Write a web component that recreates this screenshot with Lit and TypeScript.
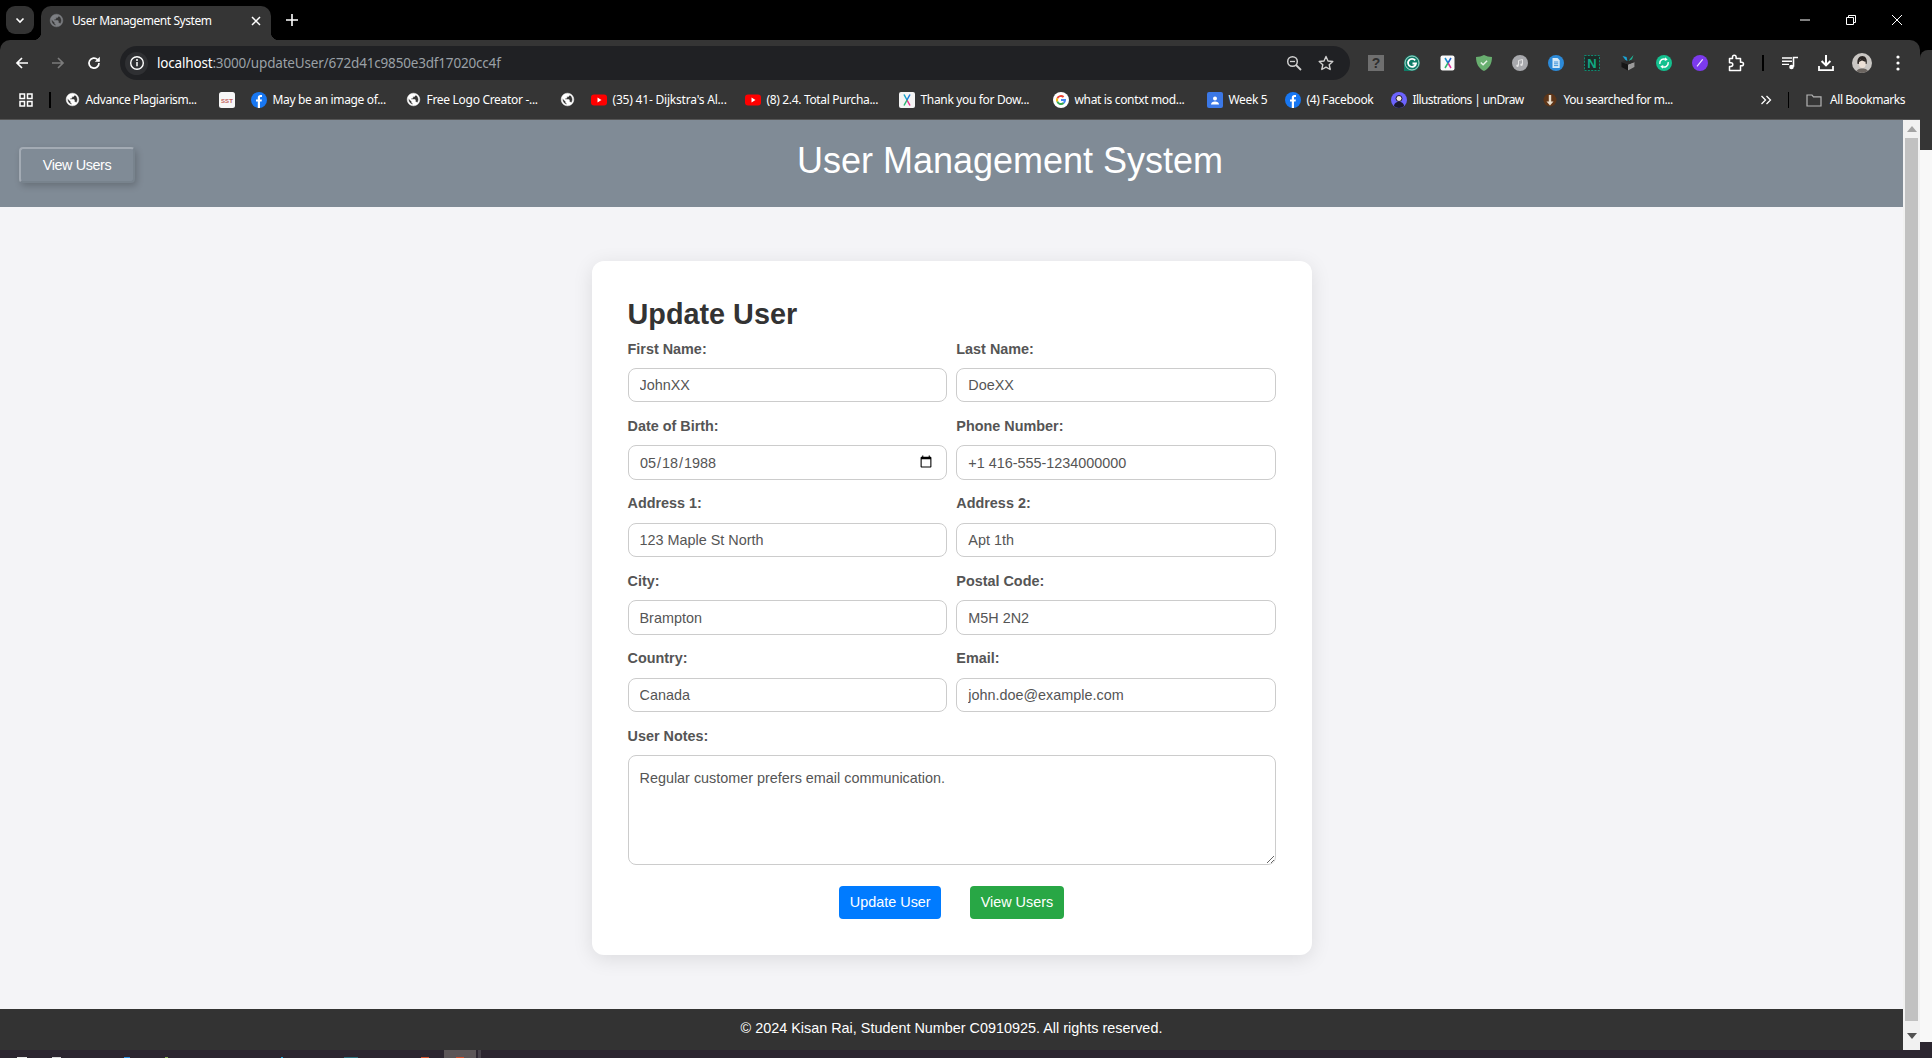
import { LitElement, html, css } from "lit";
import { customElement } from "lit/decorators.js";

const globePath = "M12 2C6.48 2 2 6.48 2 12s4.48 10 10 10 10-4.48 10-10S17.52 2 12 2zm-1 17.93c-3.95-.49-7-3.85-7-7.93 0-.62.08-1.21.21-1.79L9 15v1c0 1.1.9 2 2 2v1.93zm6.9-2.54c-.26-.81-1-1.39-1.9-1.39h-1v-3c0-.55-.45-1-1-1H8v-2h2c.55 0 1-.45 1-1V7h2c1.1 0 2-.9 2-2v-.41c2.93 1.19 5 4.06 5 7.41 0 2.08-.8 3.97-2.1 5.39z";

const globe = (c = "#fff") => html`<svg viewBox="0 0 24 24" class="i15"><circle cx="12" cy="12" r="10" fill="#353535"/><path d=${globePath} fill=${c} stroke=${c} stroke-width=".9"/></svg>`;
const fb = html`<svg viewBox="0 0 16 16" class="i16"><circle cx="8" cy="8" r="8" fill="#1877f2"/><path d="M11 5.100H9.900c-.7 0-.9.4-.9.9v1.400h1.900l-.3 2H9V16H6.800v-6.600H5v-2h1.800V5.700C6.800 3.800 7.900 3 9.500 3c.7 0 1.200.05 1.500.1z" fill="#fff"/></svg>`;
const yt = html`<svg viewBox="0 0 16 16" class="i16"><rect y="2.500" width="16" height="11" rx="3" fill="#f00"/><path d="M6.500 5.500v5L10.500 8z" fill="#fff"/></svg>`;
const xlogo = html`<svg viewBox="0 0 16 16" class="i16"><rect width="16" height="16" rx="2" fill="#f4f4f4"/><path d="M5 2.500l3 5.500" stroke="#15a5c9" stroke-width="1.500" fill="none"/><path d="M11 2.500L8 8" stroke="#1c7bd6" stroke-width="1.500" fill="none"/><path d="M8 8l3 5.500" stroke="#ea2d8e" stroke-width="1.500" fill="none"/><path d="M8 8l-3 5.500" stroke="#2cb673" stroke-width="1.500" fill="none"/></svg>`;
const sst = html`<svg viewBox="0 0 16 16" class="i16"><rect width="16" height="16" rx="2.500" fill="#f7f7f7"/><text x="8" y="10.500" text-anchor="middle" font-size="6" font-weight="700" font-family="Liberation Sans" fill="#c2605a" letter-spacing=".1">SST</text></svg>`;
const goog = html`<svg viewBox="0 0 16 16" class="i16"><circle cx="8" cy="8" r="8" fill="#fff"/><path d="M4.300 6.500A3.900 3.900 0 0 1 10.600 5.100" stroke="#ea4335" stroke-width="2" fill="none"/><path d="M4.300 9.500a3.900 3.900 0 0 1 0-3" stroke="#fbbc05" stroke-width="2" fill="none"/><path d="M4.300 9.500A3.900 3.900 0 0 0 10.600 11" stroke="#34a853" stroke-width="2" fill="none"/><path d="M8 8h4c0 1.300-.5 2.300-1.400 3" stroke="#4285f4" stroke-width="2" fill="none"/></svg>`;
const week = html`<svg viewBox="0 0 16 16" class="i16"><rect width="16" height="16" rx="2" fill="#3b78e7"/><circle cx="8" cy="6.500" r="2" fill="#fff"/><path d="M4 12.500c0-2 1.800-3 4-3s4 1 4 3z" fill="#fff"/></svg>`;
const undraw = html`<svg viewBox="0 0 16 16" class="i16"><circle cx="8" cy="8" r="8" fill="#6c63ff"/><circle cx="8" cy="6.500" r="3" fill="#f3e6dc" stroke="#1c1a2e" stroke-width="1"/><path d="M2.800 14c.6-3 2.800-4.300 5.200-4.300S12.600 11 13.200 14A8 8 0 0 1 2.800 14z" fill="#1c1a2e"/></svg>`;
const acorn = html`<svg viewBox="0 0 16 16" class="i16"><circle cx="8" cy="8" r="6.500" fill="#5d3518"/><path d="M6.800 3h2.400v6.500h2.300L8 13.500 4.500 9.500h2.300z" fill="#e9ddcc"/></svg>`;

const ico = {
  q: html`<svg viewBox="0 0 16 16" class="i16"><rect width="16" height="16" fill="#6f6f6f"/><text x="8" y="13" text-anchor="middle" font-size="14" font-weight="700" font-family="Liberation Sans" fill="#2e2e2e">?</text></svg>`,
  gram: html`<svg viewBox="0 0 16 16" class="i16"><path d="M8 0a8 8 0 0 1 0 16H0V8a8 8 0 0 1 8-8z" fill="#0f7c68"/><circle cx="8" cy="8" r="7" fill="#0f7c68" stroke="#d8efe9" stroke-width=".8"/><path d="M11.200 5.400A4 4 0 1 0 12 8.500H8.500" stroke="#fff" stroke-width="1.800" fill="none"/></svg>`,
  x: html`<svg viewBox="0 0 16 16" class="i16"><rect x=".5" y=".5" width="14" height="15" rx="2" fill="#fafafa"/><path d="M5 3l3 5" stroke="#1a8fd0" stroke-width="1.500" fill="none"/><path d="M11 3L8 8" stroke="#1e62c9" stroke-width="1.500" fill="none"/><path d="M8 8l3 5" stroke="#e32c9b" stroke-width="1.500" fill="none"/><path d="M8 8l-3 5" stroke="#32b56f" stroke-width="1.500" fill="none"/></svg>`,
  shield: html`<svg viewBox="0 0 16 16" class="i16"><path d="M8 0c2.500 1.300 5 1.800 8 2 0 6.500-2.500 11.300-8 14C2.500 13.300 0 8.500 0 2c3-.2 5.500-.7 8-2z" fill="#68ae6f"/><path d="M4.800 7.500l2.300 2.300 4-4" stroke="#e6f3e7" stroke-width="1.500" fill="none"/></svg>`,
  music: html`<svg viewBox="0 0 16 16" class="i16"><circle cx="8" cy="8" r="8" fill="#a8a9ad"/><path d="M6.500 10.500v-5l4-1v5" stroke="#e4e4e4" stroke-width="1" fill="none"/><circle cx="5.500" cy="10.700" r="1.200" fill="#e4e4e4"/><circle cx="9.500" cy="9.800" r="1.200" fill="#e4e4e4"/></svg>`,
  doc: html`<svg viewBox="0 0 16 16" class="i16"><circle cx="8" cy="8" r="8" fill="#2c8ad8"/><path d="M4.500 3h5l2.200 2.200V13h-7.200z" fill="#d5e8f7"/><path d="M6 7h4.200M6 8.800h4.200M6 10.600h4.200" stroke="#2c8ad8" stroke-width=".9"/></svg>`,
  n: html`<svg viewBox="0 0 16 16" class="i16"><rect x=".5" y=".5" width="15" height="15" fill="#1e2b28" stroke="#0f8a70" stroke-dasharray="2 1.300"/><text x="8" y="13" text-anchor="middle" font-size="13" font-weight="700" font-family="Liberation Sans" fill="#10a883">N</text></svg>`,
  box: html`<svg viewBox="0 0 16 16" class="i16"><path d="M1.500 7L8 9.500 14.500 7v5L8 15.500 1.500 12z" fill="#151515"/><path d="M8 9.500v6L14.500 12V7z" fill="#9a9a9a"/><path d="M1.500 7L8 4.500 14.500 7 8 9.500z" fill="#2b2b2b"/><path d="M2.500 1L5.500 5 7.500 6 6.500 2z" fill="#1aa6d9"/><path d="M13.500 0L10 4 8.500 6 12 4.200z" fill="#1fb89a"/></svg>`,
  sync: html`<svg viewBox="0 0 16 16" class="i16"><circle cx="8" cy="8" r="8" fill="#14c08f"/><path d="M3.800 8.800A4.300 4.300 0 0 1 10 4.400" stroke="#fff" stroke-width="1.500" fill="none"/><path d="M9.200 2.300l2.500 2.500-3 1.300z" fill="#fff"/><path d="M12.200 7.200A4.300 4.300 0 0 1 6 11.600" stroke="#fff" stroke-width="1.500" fill="none"/><path d="M6.800 13.700l-2.500-2.500 3-1.300z" fill="#fff"/></svg>`,
  pen: html`<svg viewBox="0 0 16 16" class="i16"><circle cx="8" cy="8" r="8" fill="#7c3aed"/><path d="M5 11.300L10.700 4.300" stroke="#f2e9ff" stroke-width="1.200" fill="none"/></svg>`,
  puzzle: html`<svg viewBox="0 0 18 18" class="i18"><path d="M2.500 4.500h3V3a1.800 1.800 0 0 1 3.600 0v1.500h4.400v3.700h1.200a1.800 1.800 0 0 1 0 3.600h-1.200v4.700h-11v-4h1.400a1.900 1.900 0 0 0 0-3.800H2.500z" fill="none" stroke="#fff" stroke-width="1.500" stroke-linejoin="round"/></svg>`,
  queue: html`<svg viewBox="0 0 18 18" class="i18"><path d="M1 4h10M1 7.200h10M1 10.400h7" stroke="#fff" stroke-width="1.400" fill="none"/><path d="M12.500 12.800V3.500H17" stroke="#fff" stroke-width="1.600" fill="none"/><circle cx="10.500" cy="13" r="2.300" fill="#fff"/></svg>`,
  dl: html`<svg viewBox="0 0 18 18" class="i18"><path d="M9 1v10M4.600 7L9 11.400 13.400 7" stroke="#fff" stroke-width="2" fill="none"/><path d="M2 12v4.200h14V12" stroke="#fff" stroke-width="1.800" fill="none"/></svg>`,
  avatar: html`<svg viewBox="0 0 20 20" class="i20"><defs><clipPath id="av"><circle cx="10" cy="10" r="10"/></clipPath></defs><g clip-path="url(#av)"><rect width="20" height="20" fill="#c9c6c3"/><path d="M5.500 11c-.8-5 1.500-8 4.800-8s5.200 3 4.300 8z" fill="#2a2523"/><ellipse cx="10.300" cy="10.500" rx="3.400" ry="4.500" fill="#ece0d6"/><path d="M6.800 9c.3-2 1.800-3.300 3.600-3.300S13.500 7 13.800 9L10 7.500z" fill="#2a2523"/><path d="M4 20c.5-3.500 2.800-4.500 6.300-4.500S16 16.500 16.500 20z" fill="#6b6560"/></g></svg>`,
  dots: html`<svg viewBox="0 0 18 18" class="i18"><circle cx="9" cy="3" r="1.600" fill="#fff"/><circle cx="9" cy="9" r="1.600" fill="#fff"/><circle cx="9" cy="15" r="1.600" fill="#fff"/></svg>`,
};

const marks = [
  { w: 154, i: globe(), t: "Advance Plagiarism...", ls: -0.42 },
  { w: 32, i: sst, t: "", ls: 0 },
  { w: 155, i: fb, t: "May be an image of...", ls: -0.34 },
  { w: 154, i: globe(), t: "Free Logo Creator -...", ls: -0.3 },
  { w: 31, i: globe(), t: "", ls: 0 },
  { w: 154, i: yt, t: "(35) 41- Dijkstra's Al...", ls: -0.2 },
  { w: 154, i: yt, t: "(8) 2.4. Total Purcha...", ls: -0.34 },
  { w: 154, i: xlogo, t: "Thank you for Dow...", ls: -0.34 },
  { w: 154, i: goog, t: "what is contxt mod...", ls: -0.34 },
  { w: 78, i: week, t: "Week 5", ls: -0.34 },
  { w: 106, i: fb, t: "(4) Facebook", ls: -0.34 },
  { w: 151, i: undraw, t: "Illustrations | unDraw", ls: -0.6 },
  { w: 140, i: acorn, t: "You searched for m...", ls: -0.45 },
];

const fields = [
  ["First Name:", "JohnXX", "text"],
  ["Last Name:", "DoeXX", "text"],
  ["Date of Birth:", "1988-05-18", "date"],
  ["Phone Number:", "+1 416-555-1234000000", "text"],
  ["Address 1:", "123 Maple St North", "text"],
  ["Address 2:", "Apt 1th", "text"],
  ["City:", "Brampton", "text"],
  ["Postal Code:", "M5H 2N2", "text"],
  ["Country:", "Canada", "text"],
  ["Email:", "john.doe@example.com", "email"],
];

const tray = [
  { l: 17, w: 10, c: "#e8e8e8" },
  { l: 25, w: 9, c: "#d8d8d8" },
  { l: 63, w: 6, c: "#2b8fe0" },
  { l: 35, w: 3, c: "#8db05a" },
  { l: 113, w: 2, c: "#26a5d8" },
  { l: 61, w: 14, c: "#2c6f7d" },
  { l: 63, w: 8, c: "#d0512e" },
];

@customElement("app-root")
export class AppRoot extends LitElement {
  static styles = css`
    :host { display: block; width: 1932px; height: 1058px; overflow: hidden; background: #000; font-family: "Liberation Sans", Arial, sans-serif; }
    svg { display: block; flex: none; }
    .i15 { width: 15px; height: 15px; }
    .i16 { width: 16px; height: 16px; }
    .i18 { width: 18px; height: 18px; }
    .i20 { width: 20px; height: 20px; }
    .desk { display: flex; height: 1050px; }
    .win { width: 1920px; flex: none; display: flex; flex-direction: column; }
    .side { flex: 1; display: flex; flex-direction: column; }
    .side .blk { height: 50px; background: #000; }
    .side .pan { height: 100px; background: #353535; border-top-left-radius: 8px; }
    .side .wht { height: 892px; background: #f8f8f8; }
    .side .drk { flex: 1; background: #2c2630; }

    .chrome-ui { font-family: "Noto Sans", "Open Sans", sans-serif; color: #fff; }
    .tabs { height: 40px; background: #000; display: flex; flex: none; }
    .tabsearch { width: 28px; height: 28px; margin: 6px 0 0 6px; background: #333; border-radius: 9px; display: flex; align-items: center; justify-content: center; }
    .tab { width: 230px; height: 34px; margin: 6px 0 0 7px; background: #353535; border-radius: 10px 10px 0 0; display: flex; align-items: center; position: relative; box-sizing: border-box; padding-left: 8px; }
    .tab::before, .tab::after { content: ""; position: absolute; bottom: 0; width: 8px; height: 8px; }
    .tab::before { left: -8px; background: radial-gradient(circle at 0 0, #000 8px, #353535 8.5px); }
    .tab::after { right: -8px; background: radial-gradient(circle at 100% 0, #000 8px, #353535 8.5px); }
    .tab .title { margin-left: 8px; font-size: 12px; letter-spacing: -0.42px; width: 167px; white-space: nowrap; margin-top: -5px; }
    .tab .fav { margin-top: -5px; }
    .tab .close { margin-top: -5px; margin-left: 11px; }
    .newtab { margin: 8px 0 0 9px; width: 24px; height: 24px; display: flex; align-items: center; justify-content: center; }
    .winctl { margin-left: auto; display: flex; }
    .winctl div { width: 46px; height: 40px; display: flex; align-items: center; justify-content: center; }

    .toolbar { height: 40px; background: #353535; border-radius: 10px 10px 0 0; display: flex; align-items: flex-end; padding-left: 4px; flex: none; }
    .slot { width: 36px; height: 34px; display: flex; align-items: center; justify-content: center; flex: none; }
    .omni { width: 1230px; height: 34px; margin: 0 8px; background: #202124; border-radius: 17px; display: flex; align-items: center; box-sizing: border-box; padding: 0 8px 0 5px; flex: none; }
    .info { width: 23px; height: 23px; border-radius: 50%; background: #2f3033; display: flex; align-items: center; justify-content: center; flex: none; }
    .url { margin-left: 9px; font-size: 13.5px; letter-spacing: -0.18px; color: #9aa0a6; white-space: nowrap; }
    .url b { font-weight: 400; color: #fff; }
    .omni .end { margin-left: auto; display: flex; }
    .omni .end div { width: 32px; display: flex; justify-content: center; }
    .tsep { width: 2px; height: 16px; background: #000; margin: 0 8px 9px; flex: none; }

    .marks { height: 40px; background: #353535; border-bottom: 1px solid #555; box-sizing: border-box; display: flex; align-items: center; flex: none; }
    .apps { margin-left: 18px; }
    .bsep { width: 1.5px; height: 16px; background: #000; flex: none; }
    .marks > .bsep:nth-child(2) { margin: 0 14px 0 15px; }
    .bm { display: flex; align-items: center; gap: 6px; flex: none; font-size: 12px; white-space: nowrap; }
    .right { margin-left: auto; display: flex; align-items: center; font-size: 12px; letter-spacing: -0.45px; padding-right: 15px; }
    .right svg:first-child { margin-right: -1px; }
    .right .sep2 { margin: 0 17px 0 17px; }
    .right .lbl { margin-left: 8px; }

    .view { flex: 1; display: flex; min-height: 0; }
    .page { flex: 1; display: flex; flex-direction: column; background: #f4f4f7; min-width: 0; }
    .hdr { height: 87px; flex: none; background: #808b96; display: flex; align-items: center; padding: 0 20px 0 19px; box-sizing: border-box; }
    .navbtn { width: 116px; height: 36px; margin-top: 2px; box-sizing: border-box; background: #808b96; color: #fff; font: 14.4px "Liberation Sans", Arial, sans-serif; letter-spacing: -0.4px; border-style: solid; border-width: 2px; border-color: #a3abb4 #78838d #78838d #a3abb4; border-radius: 4px; box-shadow: 2px 3px 7px rgba(0, 0, 0, 0.2); padding: 0; }
    h1 { flex: 1; margin: -6px 0 0; padding-left: 2px; text-align: center; font-weight: 400; font-size: 36px; color: #fff; }
    main { flex: 1; display: flex; justify-content: center; padding-top: 54px; box-sizing: border-box; min-height: 0; }
    .card { width: 720px; height: 694px; box-sizing: border-box; padding: 36px; background: #fff; border-radius: 12px; box-shadow: 0 4px 20px rgba(0, 0, 0, 0.1); }
    h2 { margin: 1px 0 9.5px; font-size: 28.8px; line-height: 33px; font-weight: 700; color: #333; }
    form { display: grid; grid-template-columns: 1fr 1fr; column-gap: 9.6px; row-gap: 15.6px; }
    label { display: block; font-size: 14.4px; line-height: 17px; font-weight: 700; color: #555; margin-bottom: 10.5px; }
    input, textarea { display: block; width: 100%; box-sizing: border-box; height: 34.4px; padding: 0 11px; border: 1px solid #ccc; border-radius: 8px; font: 14.4px "Liberation Sans", Arial, sans-serif; color: #555; background: #fff; outline: none; margin: 0; }
    input[type="date"] { padding: 0 10.5px; }
    textarea { height: 109.4px; padding: 13.5px 11px 0; }
    .wide { grid-column: 1 / -1; }
    .acts { grid-column: 1 / -1; display: flex; justify-content: center; gap: 29px; margin-top: 5.5px; }
    .acts button { height: 33px; border: 0; border-radius: 4px; color: #fff; padding: 0 10.5px; font: 14.4px "Liberation Sans", Arial, sans-serif; }
    .blue { background: #007bff; }
    .green { background: #28a745; }
    footer { height: 41px; flex: none; background: #333; color: #fff; display: flex; align-items: center; justify-content: center; font-size: 14.4px; padding-bottom: 3px; box-sizing: border-box; }
    .sb { width: 17px; flex: none; background: #f1f1f1; display: flex; flex-direction: column; align-items: center; }
    .sb .up { height: 18px; flex: none; display: flex; align-items: center; justify-content: center; }
    .sb .thumb { width: 13px; height: 883px; background: #c1c1c1; flex: none; }
    .sb .down { flex: 1; display: flex; align-items: center; justify-content: center; }

    .taskbar { height: 8px; background: #2c2630; display: flex; }
    .tile { width: 32px; height: 8px; margin-left: 444px; flex: none; background: #5c5658; display: flex; align-items: flex-end; justify-content: center; }
    .tile span { width: 8px; height: 1.5px; background: #d0512e; }
    .tile2 { width: 3px; height: 8px; background: #47424a; margin-left: 2px; flex: none; }
    .taskbits { display: flex; align-items: flex-end; width: 0; flex: none; }
    .taskbits span { height: 1.5px; flex: none; }
  `;

  render() {
    return html`
      <div class="desk">
        <div class="win">
          <div class="chrome-ui">
            <div class="tabs">
              <div class="tabsearch"><svg viewBox="0 0 12 12" width="12" height="12"><path d="M2.5 4.500L6 8l3.500-3.500" stroke="#fff" stroke-width="1.600" fill="none"/></svg></div>
              <div class="tab">
                <span class="fav">${globe("#7d7f83")}</span>
                <span class="title">User Management System</span>
                <svg class="close" viewBox="0 0 12 12" width="12" height="12"><path d="M2 2l8 8M10 2l-8 8" stroke="#fff" stroke-width="1.500"/></svg>
              </div>
              <div class="newtab"><svg viewBox="0 0 14 14" width="14" height="14"><path d="M7 1v12M1 7h12" stroke="#fff" stroke-width="1.600"/></svg></div>
              <div class="winctl">
                <div><svg viewBox="0 0 12 12" width="12" height="12"><path d="M1 6h10" stroke="#fff"/></svg></div>
                <div><svg viewBox="0 0 12 12" width="12" height="12"><path d="M1.500 3.500h7v7h-7zM3.500 3.500v-2h7v7h-2" stroke="#fff" fill="none"/></svg></div>
                <div><svg viewBox="0 0 12 12" width="12" height="12"><path d="M1 1l10 10M11 1L1 11" stroke="#fff"/></svg></div>
              </div>
            </div>
            <div class="toolbar">
              <div class="slot"><svg viewBox="0 0 16 16" class="i16"><path d="M14 8H3M8 3L3 8l5 5" stroke="#fff" stroke-width="1.700" fill="none"/></svg></div>
              <div class="slot"><svg viewBox="0 0 16 16" class="i16"><path d="M2 8h11M8 3l5 5-5 5" stroke="#7b7b7b" stroke-width="1.700" fill="none"/></svg></div>
              <div class="slot"><svg viewBox="0 0 16 16" class="i16"><path d="M13 8a5 5 0 1 1-1.500-3.500L13 6" stroke="#fff" stroke-width="1.700" fill="none"/><path d="M13.800 1.800v5h-5z" fill="#fff"/></svg></div>
              <div class="omni">
                <div class="info"><svg viewBox="0 0 16 16" class="i16"><circle cx="8" cy="8" r="6.300" stroke="#fff" stroke-width="1.400" fill="none"/><path d="M8 7v4.200" stroke="#fff" stroke-width="1.500"/><circle cx="8" cy="4.900" r="1" fill="#fff"/></svg></div>
                <span class="url"><b>localhost</b>:3000/updateUser/672d41c9850e3df17020cc4f</span>
                <div class="end">
                  <div><svg viewBox="0 0 16 16" class="i16"><circle cx="6.500" cy="6.500" r="4.800" stroke="#d0d0d0" stroke-width="1.500" fill="none"/><path d="M10 10l5 5" stroke="#d0d0d0" stroke-width="1.800"/><path d="M4 6.500h5" stroke="#d0d0d0" stroke-width="1.300"/></svg></div>
                  <div><svg viewBox="0 0 16 16" class="i16"><path d="M8 1.500l2 4.500 4.800.5-3.600 3.200 1 4.800L8 12.100l-4.200 2.400 1-4.800L1.200 6.500 6 6z" stroke="#d0d0d0" stroke-width="1.400" fill="none" stroke-linejoin="round"/></svg></div>
                </div>
              </div>
              <div class="slot">${ico.q}</div>
              <div class="slot">${ico.gram}</div>
              <div class="slot">${ico.x}</div>
              <div class="slot">${ico.shield}</div>
              <div class="slot">${ico.music}</div>
              <div class="slot">${ico.doc}</div>
              <div class="slot">${ico.n}</div>
              <div class="slot">${ico.box}</div>
              <div class="slot">${ico.sync}</div>
              <div class="slot">${ico.pen}</div>
              <div class="slot">${ico.puzzle}</div>
              <div class="tsep"></div>
              <div class="slot">${ico.queue}</div>
              <div class="slot">${ico.dl}</div>
              <div class="slot">${ico.avatar}</div>
              <div class="slot">${ico.dots}</div>
            </div>
            <div class="marks">
              <svg class="apps i16" viewBox="0 0 16 16"><path d="M2 2h4.500v4.500H2zM9.500 2H14v4.500H9.500zM2 9.500h4.500V14H2zM9.500 9.500H14V14H9.500z" stroke="#fff" stroke-width="1.500" fill="none"/></svg>
              <div class="bsep"></div>
              ${marks.map(
                (m) => html`<div class="bm" style="width:${m.w}px;letter-spacing:${m.ls}px">${m.i}${m.t ? html`<span>${m.t}</span>` : ""}</div>`
              )}
              <div class="right">
                <svg viewBox="0 0 12 12" width="12" height="12"><path d="M1.500 2l4 4-4 4M6.500 2l4 4-4 4" stroke="#fff" stroke-width="1.300" fill="none"/></svg>
                <div class="bsep sep2"></div>
                <svg viewBox="0 0 16 16" class="i16"><path d="M1 3h5l1.500 1.800H15V14H1z" stroke="#b5b5b5" stroke-width="1.200" fill="none"/></svg>
                <span class="lbl">All Bookmarks</span>
              </div>
            </div>
          </div>
          <div class="view">
            <div class="page">
              <div class="hdr">
                <button class="navbtn">View Users</button>
                <h1>User Management System</h1>
              </div>
              <main>
                <div class="card">
                  <h2>Update User</h2>
                  <form>
                    ${fields.map(
                      ([l, v, t]) => html`<div><label>${l}</label><input type=${t} value=${v} /></div>`
                    )}
                    <div class="wide"><label>User Notes:</label><textarea>Regular customer prefers email communication.</textarea></div>
                    <div class="acts">
                      <button type="button" class="blue">Update User</button>
                      <button type="button" class="green">View Users</button>
                    </div>
                  </form>
                </div>
              </main>
              <footer>© 2024 Kisan Rai, Student Number C0910925. All rights reserved.</footer>
            </div>
            <div class="sb">
              <div class="up"><svg viewBox="0 0 10 6" width="10" height="6"><path d="M0 6L5 0l5 6z" fill="#a3a3a3"/></svg></div>
              <div class="thumb"></div>
              <div class="down"><svg viewBox="0 0 10 6" width="10" height="6"><path d="M0 0l5 6 5-6z" fill="#505050"/></svg></div>
            </div>
          </div>
        </div>
        <div class="side">
          <div class="blk"></div>
          <div class="pan"></div>
          <div class="wht"></div>
          <div class="drk"></div>
        </div>
      </div>
      <div class="taskbar">
        <div class="taskbits">
          ${tray.map((b) => html`<span style="margin-left:${b.l}px;width:${b.w}px;background:${b.c}"></span>`)}
        </div>
        <div class="tile"><span></span></div>
        <div class="tile2"></div>
      </div>
    `;
  }
}
